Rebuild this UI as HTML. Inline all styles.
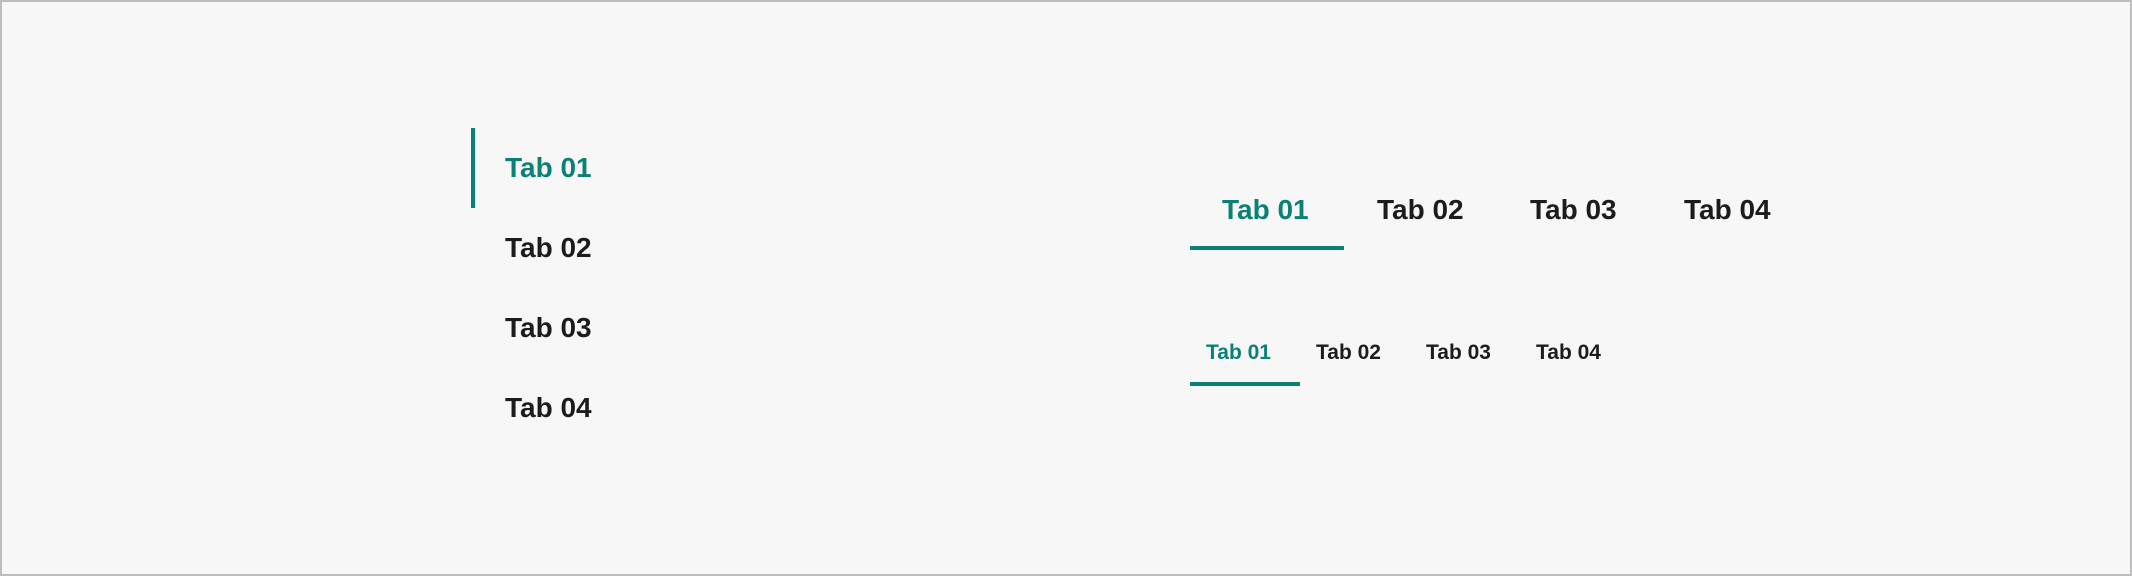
<!DOCTYPE html>
<html><head><meta charset="utf-8"><style>
html,body{margin:0;padding:0}
body{width:2132px;height:576px;background:#f7f7f7;position:relative;overflow:hidden;font-family:"Liberation Sans",sans-serif;font-weight:bold;color:#1c1c1c}
.frame{position:absolute;left:0;top:0;width:2128px;height:572px;border:2px solid #bdbdbd}
.t{position:absolute;white-space:nowrap;line-height:1}
.b{font-size:28px}
.s{font-size:21px}
.a{color:#0b8074}
.bar{position:absolute;background:#0b8074}
</style></head><body>
<div class="frame"></div>
<div class="bar" style="left:471px;top:128px;width:4px;height:80px"></div>
<div class="t b a" style="left:505px;top:154px">Tab 01</div>
<div class="t b" style="left:505px;top:234px">Tab 02</div>
<div class="t b" style="left:505px;top:314px">Tab 03</div>
<div class="t b" style="left:505px;top:394px">Tab 04</div>

<div class="t b a" style="left:1222px;top:196px">Tab 01</div>
<div class="t b" style="left:1377px;top:196px">Tab 02</div>
<div class="t b" style="left:1530px;top:196px">Tab 03</div>
<div class="t b" style="left:1684px;top:196px">Tab 04</div>
<div class="bar" style="left:1190px;top:246px;width:154px;height:4px"></div>

<div class="t s a" style="left:1206px;top:342px">Tab 01</div>
<div class="t s" style="left:1316px;top:342px">Tab 02</div>
<div class="t s" style="left:1426px;top:342px">Tab 03</div>
<div class="t s" style="left:1536px;top:342px">Tab 04</div>
<div class="bar" style="left:1190px;top:382px;width:110px;height:4px"></div>
</body></html>
